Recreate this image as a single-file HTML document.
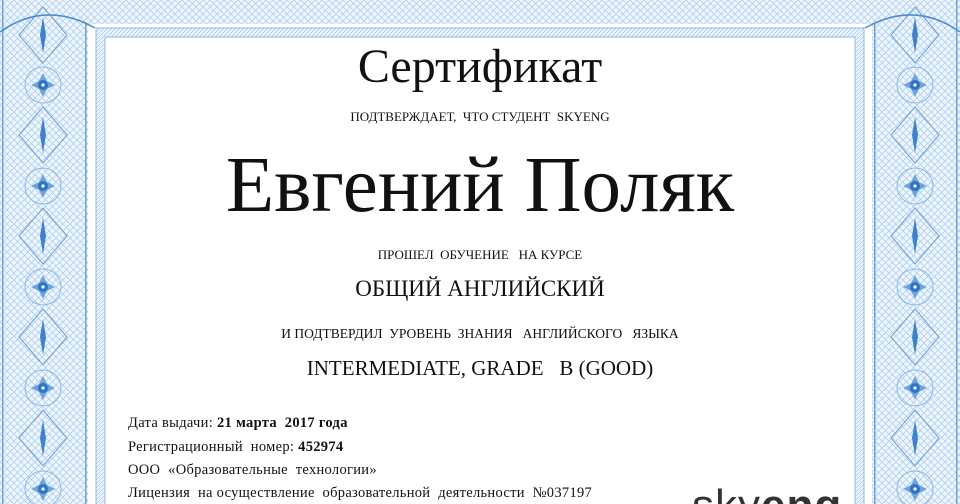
<!DOCTYPE html>
<html><head><meta charset="utf-8"><style>
html,body{margin:0;padding:0;width:960px;height:504px;overflow:hidden;background:#fff;font-family:"Liberation Serif",serif;color:#111}
#w{position:relative;width:960px;height:504px;overflow:hidden}
.t{position:absolute;left:0;width:960px;text-align:center;white-space:nowrap;line-height:1}
.l{position:absolute;left:128px;font-size:14.5px;letter-spacing:0.3px;white-space:nowrap;line-height:1}
</style></head><body><div id="w">
<svg width="960" height="504" style="position:absolute;left:0;top:0">
<defs>
<pattern id="g" width="7" height="7" patternUnits="userSpaceOnUse">
<rect width="7" height="7" fill="#eef5fc"/>
<path d="M0 0L7 7M7 0L0 7" stroke="#a5c9ee" stroke-width="0.7"/>
</pattern>
<pattern id="f" width="4" height="4" patternUnits="userSpaceOnUse">
<rect width="4" height="4" fill="#eef5fc"/>
<path d="M0 4L4 0" stroke="#9fc4ec" stroke-width="0.7"/>
</pattern>
<g id="ros">
<circle r="18" fill="none" stroke="#8bb8e6" stroke-width="1"/>
<path d="M0-12L4-4 12 0 4 4 0 12-4 4-12 0-4-4Z" fill="#6ea4de"/>
<circle r="5" fill="#2f74c4"/><circle r="1.6" fill="#fff"/>
</g>
<g id="dia">
<path d="M0-28L24 0 0 28-24 0Z" fill="none" stroke="#6e9fd6" stroke-width="1"/>
<path d="M0-18L3 0 0 18-3 0Z" fill="#3f82cc"/>
</g>
</defs>
<rect x="0" y="0" width="88" height="504" fill="url(#g)"/>
<rect x="872" y="0" width="88" height="504" fill="url(#g)"/>
<rect x="0" y="0" width="960" height="24" fill="url(#g)"/>
<rect x="2" y="0" width="1.5" height="504" fill="#6fa3dc"/>
<rect x="956" y="0" width="1.5" height="504" fill="#6fa3dc"/>
<rect x="85" y="24" width="1.5" height="480" fill="#6fa3dc"/>
<rect x="874" y="24" width="1.5" height="480" fill="#6fa3dc"/>
<rect x="96" y="28" width="768" height="476" fill="url(#f)"/>
<rect x="105" y="37" width="750" height="467" fill="#fff"/>
<rect x="96" y="28" width="768" height="480" fill="none" stroke="#8bb8e6" stroke-width="1"/>
<rect x="105" y="37" width="750" height="470" fill="none" stroke="#8bb8e6" stroke-width="1"/>
<g>
<use href="#ros" x="43" y="85"/><use href="#ros" x="43" y="186"/><use href="#ros" x="43" y="287"/><use href="#ros" x="43" y="388"/><use href="#ros" x="43" y="489"/>
<use href="#dia" x="43" y="135"/><use href="#dia" x="43" y="236"/><use href="#dia" x="43" y="337"/><use href="#dia" x="43" y="438"/><use href="#dia" x="43" y="35"/>
<use href="#ros" x="915" y="85"/><use href="#ros" x="915" y="186"/><use href="#ros" x="915" y="287"/><use href="#ros" x="915" y="388"/><use href="#ros" x="915" y="489"/>
<use href="#dia" x="915" y="135"/><use href="#dia" x="915" y="236"/><use href="#dia" x="915" y="337"/><use href="#dia" x="915" y="438"/><use href="#dia" x="915" y="35"/>
</g>
<path d="M0 32Q45 0 95 28" fill="none" stroke="#4d8bd0" stroke-width="1.5"/>
<path d="M960 32Q915 0 865 28" fill="none" stroke="#4d8bd0" stroke-width="1.5"/>
</svg>
<div class="t" style="top:43px;font-size:48px">Сертификат</div>
<div class="t" style="top:110px;font-size:13px">ПОДТВЕРЖДАЕТ,&nbsp; ЧТО СТУДЕНТ&nbsp; SKYENG</div>
<div class="t" style="top:146px;font-size:79px">Евгений Поляк</div>
<div class="t" style="top:248px;font-size:13px">ПРОШЕЛ&nbsp; ОБУЧЕНИЕ&nbsp;&nbsp; НА КУРСЕ</div>
<div class="t" style="top:277px;font-size:23px">ОБЩИЙ АНГЛИЙСКИЙ</div>
<div class="t" style="top:327px;font-size:13.5px">И ПОДТВЕРДИЛ&nbsp; УРОВЕНЬ&nbsp; ЗНАНИЯ&nbsp;&nbsp; АНГЛИЙСКОГО&nbsp;&nbsp; ЯЗЫКА</div>
<div class="t" style="top:358px;font-size:21px">INTERMEDIATE, GRADE &nbsp;&nbsp;B (GOOD)</div>
<div class="l" style="top:416px">Дата выдачи: <b>21 марта&nbsp; 2017 года</b></div>
<div class="l" style="top:440px">Регистрационный&nbsp; номер: <b>452974</b></div>
<div class="l" style="top:463px">ООО&nbsp; «Образовательные&nbsp; технологии»</div>
<div class="l" style="top:486px">Лицензия&nbsp; на осуществление&nbsp; образовательной&nbsp; деятельности&nbsp; №037197</div>
<div style="position:absolute;left:692px;top:484px;font-family:'Liberation Sans',sans-serif;font-size:44px;line-height:1;color:#333;letter-spacing:1px">sky<b>eng</b></div>
</div></body></html>
